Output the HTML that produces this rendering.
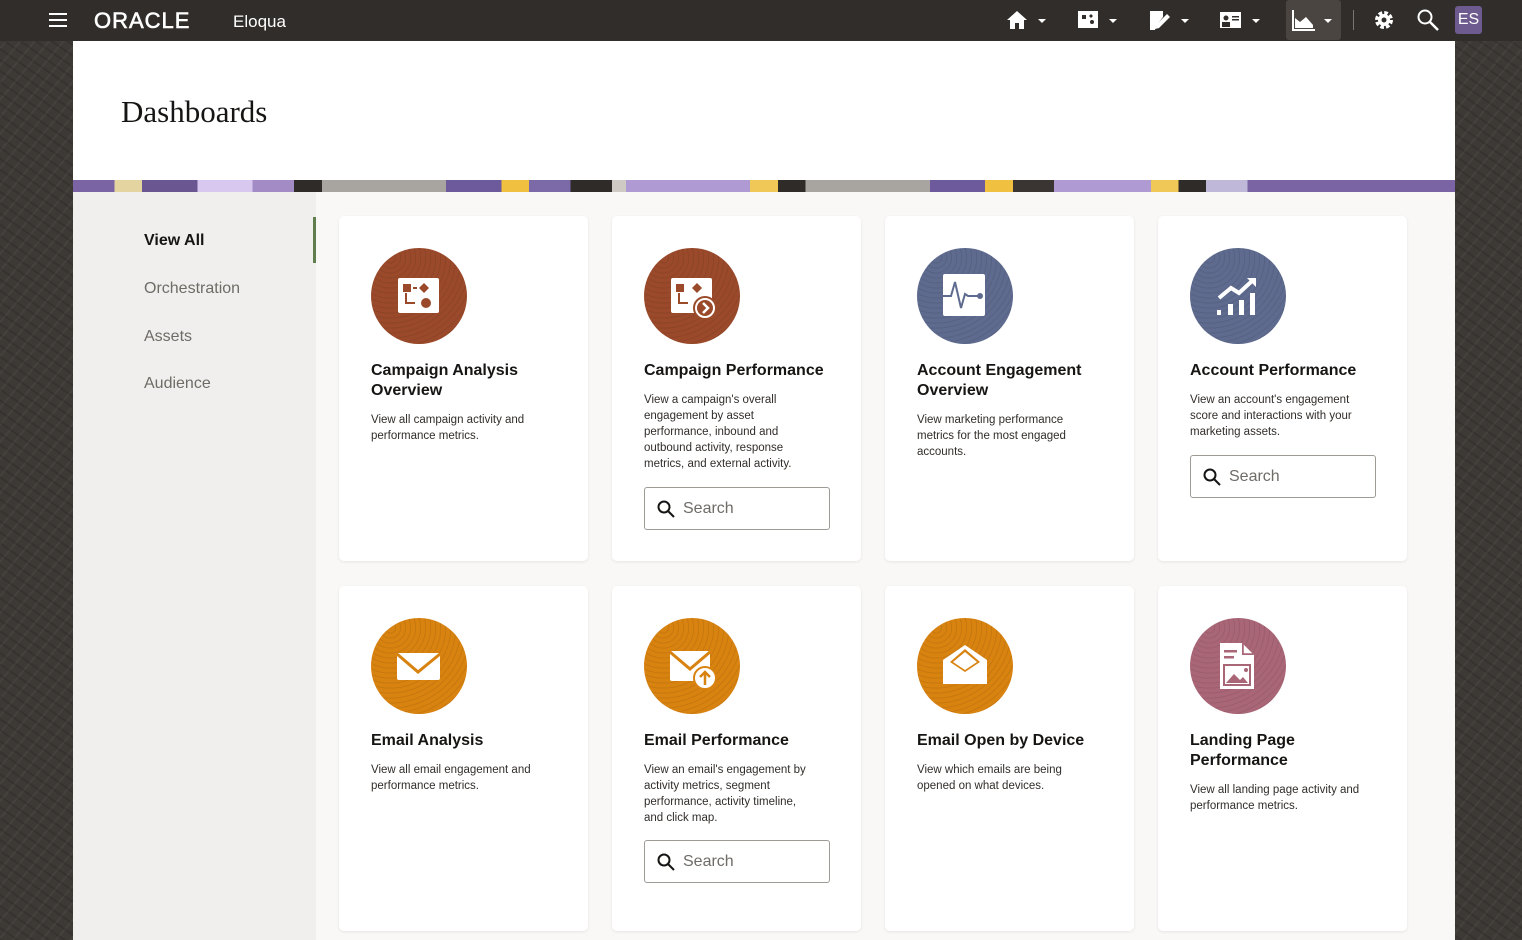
<!DOCTYPE html>
<html><head><meta charset="utf-8">
<style>
*{box-sizing:border-box;margin:0;padding:0}
body{width:1522px;height:940px;overflow:hidden;background:#3d3935;font-family:"Liberation Sans",sans-serif;position:relative;
background-image:repeating-linear-gradient(35deg,rgba(0,0,0,.12) 0 2px,transparent 2px 9px),repeating-linear-gradient(-50deg,rgba(255,255,255,.04) 0 2px,transparent 2px 11px);}
.top{position:absolute;left:0;top:0;width:1522px;height:41px;background:#312d2a;color:#fff}
.top .burg{position:absolute;left:49px;top:13px;width:18px;height:14px;border-top:2px solid #fff;border-bottom:2px solid #fff}
.top .burg:after{content:"";position:absolute;left:0;top:4px;width:18px;height:2px;background:#fff}
.logo{position:absolute;left:94px;top:8px;font-size:22px;letter-spacing:1px;font-weight:normal;-webkit-text-stroke:0.6px #fff}
.elq{position:absolute;left:233px;top:12px;font-size:17px}
.ico{position:absolute;top:8px}
.caret{position:absolute;top:19px;width:0;height:0;border-left:4px solid transparent;border-right:4px solid transparent;border-top:4px solid #fff}
.hdr{position:absolute;left:73px;top:41px;width:1382px;height:140px;background:#fff}
.hdr h1{position:absolute;left:48px;top:53px;font-family:"Liberation Serif",serif;font-weight:normal;font-size:31px;color:#161513}
.stripe{position:absolute;left:73px;top:180px;width:1382px;height:12px;
background:linear-gradient(90deg,#7a64a4 0 3%,#e4d4a0 3% 5%,#6a5690 5% 9%,#d8c8f0 9% 13%,#a38bc6 13% 16%,#2f2b28 16% 18%,#a8a49f 18% 27%,#6c5a9c 27% 31%,#f0c040 31% 33%,#7c6aa8 33% 36%,#2f2b28 36% 39%,#cfcac4 39% 40%,#b09ad4 40% 49%,#f0c858 49% 51%,#2f2b28 51% 53%,#a8a49f 53% 62%,#6c5a9c 62% 66%,#f0c040 66% 68%,#3a3532 68% 71%,#b09ad4 71% 78%,#f0c858 78% 80%,#2f2b28 80% 82%,#c0b8d8 82% 85%,#7a64a4 85% 100%)}
.side{position:absolute;left:73px;top:192px;width:243px;height:748px;background:#f1efed}
.side div{position:absolute;left:71px;font-size:16px;color:#6f6b67}
.side .act{color:#161513;font-weight:bold}
.side .bar{position:absolute;left:240px;top:25px;width:3px;height:46px;background:#5f7d4f}
.main{position:absolute;left:316px;top:192px;width:1139px;height:748px;background:#f9f8f6}
.card{position:absolute;width:249px;height:345px;background:#fff;border-radius:5px;box-shadow:0 1px 3px rgba(0,0,0,.08)}
.circ{position:absolute;left:32px;top:32px;width:96px;height:96px;border-radius:50%;
background-image:repeating-radial-gradient(circle at 20% 10%,rgba(0,0,0,.08) 0 1px,transparent 1px 5px)}
.circ svg{position:absolute;left:0;top:0}
.card h3{position:absolute;left:32px;top:145px;width:200px;font-size:16px;line-height:20px;color:#161513;font-weight:bold}
.card p{position:absolute;left:32px;width:172px;font-size:11.5px;line-height:16px;color:#312d2a}
.srch{position:absolute;left:32px;width:186px;height:43px;border:1px solid #9e9a96;border-radius:3px;font-size:16px;color:#6f6b67;padding:12px 0 0 38px}
.srch svg{position:absolute;left:12px;top:12px}
.brown{background-color:#9a4a2a}.blue{background-color:#5e6a8e}.org{background-color:#d88210}.mauve{background-color:#a96677}
</style></head><body>
<div class="top">
<div class="burg"></div>
<div class="logo">ORACLE</div>
<div class="elq">Eloqua</div>
<svg class="ico" style="left:1005px" width="24" height="24" viewBox="0 0 24 24"><path d="M2 12 12 3l10 9h-3v9h-5v-6h-4v6H5v-9z" fill="#fff"/></svg><div class="caret" style="left:1038px"></div>
<svg class="ico" style="left:1077px" width="24" height="24" viewBox="0 0 24 24"><rect x="1" y="3" width="20" height="17" fill="#fff"/><rect x="5" y="7" width="4" height="4" fill="#312d2a"/><circle cx="15" cy="14" r="2" fill="#312d2a"/><path d="M14 6l2 2-2 2-2-2z" fill="#312d2a"/></svg><div class="caret" style="left:1109px"></div>
<svg class="ico" style="left:1148px" width="24" height="24" viewBox="0 0 24 24"><path d="M2 3h13v6L8 18l-1 4H2z" fill="#fff"/><path d="M19 6l3 3-11 11-4 1 1-4z" fill="#fff"/></svg><div class="caret" style="left:1181px"></div>
<svg class="ico" style="left:1219px" width="24" height="24" viewBox="0 0 24 24"><rect x="1" y="4" width="21" height="16" fill="#fff"/><circle cx="7" cy="10" r="2.5" fill="#312d2a"/><rect x="3" y="14" width="8" height="5" fill="#312d2a"/><rect x="13" y="8" width="7" height="1.5" fill="#312d2a"/><rect x="13" y="11" width="7" height="1.5" fill="#312d2a"/></svg><div class="caret" style="left:1252px"></div>
<div style="position:absolute;left:1286px;top:0;width:55px;height:40px;background:#4a4541;border-radius:3px"></div>
<svg class="ico" style="left:1292px" width="24" height="24" viewBox="0 0 24 24"><path d="M1 2v20h22" stroke="#fff" stroke-width="2" fill="none"/><path d="M3 20V10l5 4 6-5 7 8v3z" fill="#fff"/></svg><div class="caret" style="left:1324px"></div>
<div style="position:absolute;left:1353px;top:10px;width:1px;height:20px;background:#7a7672"></div>
<svg class="ico" style="left:1372px" width="24" height="24" viewBox="0 0 24 24"><circle cx="12" cy="12" r="7" fill="none" stroke="#fff" stroke-width="4" stroke-dasharray="3.5 2"/><circle cx="12" cy="12" r="6" fill="#fff"/><circle cx="12" cy="12" r="2.5" fill="#312d2a"/></svg>
<svg class="ico" style="left:1416px" width="24" height="24" viewBox="0 0 24 24"><circle cx="9" cy="9" r="6.5" fill="none" stroke="#fff" stroke-width="2"/><path d="M14 14l8 8" stroke="#fff" stroke-width="2.5"/></svg>
<div style="position:absolute;left:1455px;top:6px;width:27px;height:28px;background:#6d5a8e;border-radius:3px;font-size:16px;color:#fff;text-align:center;line-height:28px">ES</div>
</div>
<div class="hdr"><h1>Dashboards</h1></div>
<div class="stripe"></div>
<div class="side"><div class="bar"></div>
<div class="act" style="top:40px">View All</div>
<div style="top:88px">Orchestration</div>
<div style="top:136px">Assets</div>
<div style="top:183px">Audience</div></div>
<div class="main"></div>

<!-- Row 1 -->
<div class="card" style="left:339px;top:216px"><div class="circ brown"><svg width="96" height="96"><rect x="27" y="30" width="41" height="35" rx="2" fill="#fff"/><rect x="32" y="36" width="8" height="8" fill="#9a4a2a"/><path d="M42 40h4" stroke="#9a4a2a" stroke-width="2"/><path d="M53 35l5 5-5 5-5-5z" fill="#9a4a2a"/><path d="M35 45v10h9" stroke="#9a4a2a" stroke-width="2" fill="none"/><circle cx="55" cy="55" r="5" fill="#9a4a2a"/></svg></div>
<h3>Campaign Analysis Overview</h3><p style="top:196px">View all campaign activity and performance metrics.</p></div>

<div class="card" style="left:612px;top:216px"><div class="circ brown"><svg width="96" height="96"><rect x="27" y="30" width="41" height="35" rx="2" fill="#fff"/><rect x="32" y="36" width="8" height="8" fill="#9a4a2a"/><path d="M53 35l5 5-5 5-5-5z" fill="#9a4a2a"/><path d="M35 45v10h9" stroke="#9a4a2a" stroke-width="2" fill="none"/><circle cx="61" cy="60" r="11" fill="#fff" stroke="#9a4a2a" stroke-width="2"/><circle cx="61" cy="60" r="8" fill="#9a4a2a"/><path d="M59 55l5 5-5 5" stroke="#fff" stroke-width="2.5" fill="none"/></svg></div>
<h3>Campaign Performance</h3><p style="top:176px">View a campaign's overall engagement by asset performance, inbound and outbound activity, response metrics, and external activity.</p>
<div class="srch" style="top:271px"><svg width="18" height="18"><circle cx="7" cy="7" r="5.5" fill="none" stroke="#161513" stroke-width="2"/><path d="M11 11l6 6" stroke="#161513" stroke-width="2"/></svg>Search</div></div>

<div class="card" style="left:885px;top:216px"><div class="circ blue"><svg width="96" height="96"><rect x="26" y="26" width="42" height="42" rx="2" fill="#fff"/><path d="M26 48h8l4-14 6 26 4-14 3 2h12" stroke="#5e6a8e" stroke-width="2" fill="none"/><circle cx="63" cy="48" r="3" fill="#5e6a8e"/></svg></div>
<h3>Account Engagement Overview</h3><p style="top:196px">View marketing performance metrics for the most engaged accounts.</p></div>

<div class="card" style="left:1158px;top:216px"><div class="circ blue"><svg width="96" height="96"><path d="M29 50l12-10 8 5 13-12" stroke="#fff" stroke-width="4" fill="none"/><path d="M57 30h9v9z" fill="#fff"/><rect x="27" y="62" width="4" height="5" fill="#fff"/><rect x="38" y="56" width="5" height="11" fill="#fff"/><rect x="49" y="52" width="5" height="15" fill="#fff"/><rect x="60" y="45" width="5" height="22" fill="#fff"/></svg></div>
<h3>Account Performance</h3><p style="top:176px">View an account's engagement score and interactions with your marketing assets.</p>
<div class="srch" style="top:239px"><svg width="18" height="18"><circle cx="7" cy="7" r="5.5" fill="none" stroke="#161513" stroke-width="2"/><path d="M11 11l6 6" stroke="#161513" stroke-width="2"/></svg>Search</div></div>

<!-- Row 2 -->
<div class="card" style="left:339px;top:586px"><div class="circ org"><svg width="96" height="96"><rect x="26" y="35" width="43" height="27" rx="2" fill="#fff"/><path d="M26 36l21 18 22-18" stroke="#d88210" stroke-width="3" fill="none"/></svg></div>
<h3>Email Analysis</h3><p style="top:176px">View all email engagement and performance metrics.</p></div>

<div class="card" style="left:612px;top:586px"><div class="circ org"><svg width="96" height="96"><rect x="26" y="33" width="40" height="30" rx="2" fill="#fff"/><path d="M26 34l20 17 20-17" stroke="#d88210" stroke-width="3" fill="none"/><circle cx="61" cy="60" r="11" fill="#fff" stroke="#d88210" stroke-width="2"/><path d="M61 67v-12M56 59l5-5 5 5" stroke="#d88210" stroke-width="2.5" fill="none"/></svg></div>
<h3>Email Performance</h3><p style="top:176px">View an email's engagement by activity metrics, segment performance, activity timeline, and click map.</p>
<div class="srch" style="top:254px"><svg width="18" height="18"><circle cx="7" cy="7" r="5.5" fill="none" stroke="#161513" stroke-width="2"/><path d="M11 11l6 6" stroke="#161513" stroke-width="2"/></svg>Search</div></div>

<div class="card" style="left:885px;top:586px"><div class="circ org"><svg width="96" height="96"><path d="M26 42l22-15 22 15v24H26z" fill="#fff"/><path d="M33 44l15-13 15 13-15 10z" fill="#d88210"/><path d="M36 44l12-10 12 10-12 8z" fill="#fff"/></svg></div>
<h3>Email Open by Device</h3><p style="top:176px">View which emails are being opened on what devices.</p></div>

<div class="card" style="left:1158px;top:586px"><div class="circ mauve"><svg width="96" height="96"><path d="M30 25h22l12 12v34H30z" fill="#fff"/><path d="M52 25v12h12" fill="#a96677"/><path d="M53 26v10h10" fill="#fff" stroke="#a96677" stroke-width="1.5"/><rect x="34" y="32" width="13" height="2.5" fill="#a96677"/><rect x="34" y="38" width="10" height="2.5" fill="#a96677"/><rect x="33" y="46" width="28" height="22" fill="#a96677"/><rect x="35" y="48" width="24" height="18" fill="#fff"/><path d="M36 65l8-9 6 6 3-3 5 6z" fill="#a96677"/><circle cx="56" cy="52" r="2" fill="#a96677"/></svg></div>
<h3>Landing Page Performance</h3><p style="top:196px">View all landing page activity and performance metrics.</p></div>
</body></html>
